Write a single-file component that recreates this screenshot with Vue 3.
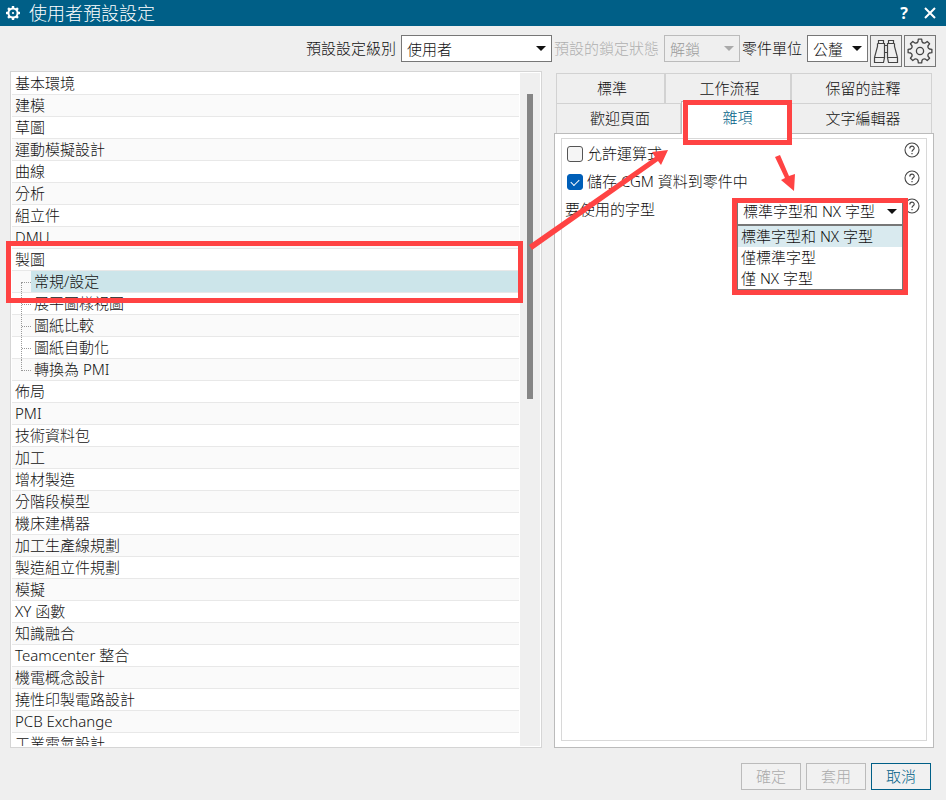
<template>
  <div class="dialog">
    <header class="titlebar">
      <svg class="titleIcon" viewBox="0 0 16 16" width="16" height="16">
        <circle cx="8" cy="8" r="4.6" fill="none" stroke="#fff" stroke-width="2" />
        <g fill="#fff">
          <rect v-for="a in 8" :key="a" x="6.8" y="1" width="2.4" height="2.6" :transform="`rotate(${a * 45} 8 8)`" />
        </g>
        <circle cx="8" cy="8" r="1.1" fill="#fff" />
      </svg>
      <h1>使用者預設設定</h1>
      <button class="titleButton help" type="button" aria-label="說明">?</button>
      <button class="titleButton" type="button" aria-label="關閉">
        <svg viewBox="0 0 12 12" width="12" height="12">
          <path d="M1 1L11 11M11 1L1 11" stroke="#fff" stroke-width="2" />
        </svg>
      </button>
    </header>

    <div class="toolbar">
      <div v-for="field in fields" :key="field.id" class="field" :class="{ disabled: field.disabled }">
        <label :for="field.id">{{ field.label }}</label>
        <div class="combo" :class="field.id">
          <select :id="field.id" :disabled="field.disabled">
            <option>{{ field.value }}</option>
          </select>
        </div>
      </div>
      <button class="iconButton" type="button" aria-label="尋找預設設定">
        <svg viewBox="0 0 30 30" width="30" height="30" fill="none" stroke="#444" stroke-width="1.2">
          <path d="M7.5 7.5V4.5H12.5V7.5M17.5 7.5V4.5H22.5V7.5" />
          <path d="M6.5 7.5H13.5V21.5M6.5 7.5V10.5L3.5 21.5V26.5H12.5L13.5 21.5H3.5M23.5 7.5H16.5V21.5M23.5 7.5V10.5L26.5 21.5V26.5H17.5L16.5 21.5H26.5" />
          <path d="M13.5 9.5H16.5M13.5 16.5H16.5" />
        </svg>
      </button>
      <button class="iconButton" type="button" aria-label="管理目前設定">
        <svg viewBox="0 0 30 30" width="30" height="30" fill="none" stroke="#444" stroke-width="1.3" stroke-linejoin="round">
          <circle cx="15" cy="15" r="3.6" />
          <path :d="gearPath" />
        </svg>
      </button>
    </div>

    <main class="content">
      <section class="treePanel">
        <ul class="tree">
          <li
            v-for="item in items"
            :key="item.name"
            :class="{ child: item.child, first: item.first, last: item.last, selected: item.name === selected }"
            @click="selected = item.name"
          >
            <span class="name">{{ item.name }}</span>
          </li>
        </ul>
        <div class="track"><div class="thumb"></div></div>
        <div class="mark treeMark"></div>
      </section>

      <section class="settings">
        <div class="tabs" role="tablist">
          <div v-for="(row, i) in tabRows" :key="i" class="tabRow" :class="'tabRow' + i">
            <button
              v-for="tab in row"
              :key="tab"
              type="button"
              role="tab"
              :aria-selected="tab === activeTab"
              :class="{ active: tab === activeTab }"
              @click="activeTab = tab"
            >
              {{ tab }}
              <span v-if="tab === '雜項'" class="mark tabMark"></span>
            </button>
          </div>
        </div>

        <div class="tabPanel" role="tabpanel">
          <div class="options">
            <div v-for="check in checks" :key="check.id" class="option">
              <input :id="check.id" v-model="check.on" type="checkbox">
              <label :for="check.id">{{ check.label }}</label>
              <button class="helpButton" type="button" aria-label="說明">
                <svg viewBox="0 0 16 16" width="16" height="16" fill="none" stroke="#444">
                  <circle cx="8" cy="8" r="7" stroke-width="1.1" />
                  <path :d="questionPath" stroke-width="1.2" />
                </svg>
              </button>
            </div>
            <div class="option">
              <label for="font">要使用的字型</label>
              <div class="fontPicker">
                <div class="combo">
                  <select id="font" v-model="font">
                    <option v-for="f in fonts" :key="f">{{ f }}</option>
                  </select>
                </div>
                <ul class="fontList" role="listbox">
                  <li
                    v-for="f in fonts"
                    :key="f"
                    role="option"
                    :aria-selected="f === font"
                    :class="{ current: f === font }"
                    @click="font = f"
                  >{{ f }}</li>
                </ul>
                <div class="mark fontMark"></div>
              </div>
              <button class="helpButton" type="button" aria-label="說明">
                <svg viewBox="0 0 16 16" width="16" height="16" fill="none" stroke="#444">
                  <circle cx="8" cy="8" r="7" stroke-width="1.1" />
                  <path :d="questionPath" stroke-width="1.2" />
                </svg>
              </button>
            </div>
          </div>
        </div>

        <svg class="arrows" viewBox="0 0 280 180" width="280" height="180">
          <g fill="#ff4343">
            <path d="M5 174L131 86L128 81L144 79L137 94L134 90L8 179Z" />
            <path d="M251 86L256 84L265 105L271 103L270 120L257 109L261 107Z" />
          </g>
        </svg>
      </section>
    </main>

    <footer class="actions">
      <button type="button" disabled>確定</button>
      <button type="button" disabled>套用</button>
      <button type="button">取消</button>
    </footer>
  </div>
</template>

<script setup>
import { ref } from "vue";

const fields = [
  { id: 'level', label: '預設設定級別', value: '使用者', disabled: false },
  { id: 'lock', label: '預設的鎖定狀態', value: '解鎖', disabled: true },
  { id: 'unit', label: '零件單位', value: '公釐', disabled: false }
]

const items = [
  { name: '基本環境' },
  { name: '建模' },
  { name: '草圖' },
  { name: '運動模擬設計' },
  { name: '曲線' },
  { name: '分析' },
  { name: '組立件' },
  { name: 'DMU' },
  { name: '製圖' },
  { name: '常規/設定', child: true, first: true },
  { name: '展平圖樣視圖', child: true },
  { name: '圖紙比較', child: true },
  { name: '圖紙自動化', child: true },
  { name: '轉換為 PMI', child: true, last: true },
  { name: '佈局' },
  { name: 'PMI' },
  { name: '技術資料包' },
  { name: '加工' },
  { name: '增材製造' },
  { name: '分階段模型' },
  { name: '機床建構器' },
  { name: '加工生產線規劃' },
  { name: '製造組立件規劃' },
  { name: '模擬' },
  { name: 'XY 函數' },
  { name: '知識融合' },
  { name: 'Teamcenter 整合' },
  { name: '機電概念設計' },
  { name: '撓性印製電路設計' },
  { name: 'PCB Exchange' },
  { name: '工業電氣設計' }
]
const selected = ref('常規/設定')

const tabRows = [
  ['標準', '工作流程', '保留的註釋'],
  ['歡迎頁面', '雜項', '文字編輯器']
]
const activeTab = ref('雜項')

const checks = ref([
  { id: 'allowExpression', label: '允許運算式', on: false },
  { id: 'saveCgm', label: '儲存 CGM 資料到零件中', on: true }
])

const fonts = ['標準字型和 NX 字型', '僅標準字型', '僅 NX 字型']
const font = ref(fonts[0])

const questionPath = 'M5.8 6.4C5.8 3.4 10.2 3.4 10.2 6.2C10.2 7.8 8 7.9 8 9.8M8 11V12.3'

function polar(r, degrees) {
  const angle = degrees * Math.PI / 180
  return (15 + r * Math.cos(angle)).toFixed(2) + ' ' + (15 + r * Math.sin(angle)).toFixed(2)
}

// outline of an eight-toothed gear around 15,15 with rounded valleys
function buildGear() {
  let d = 'M' + polar(12, -8)
  for (let a = 0; a < 360; a += 45) {
    d += 'L' + polar(12, a + 8) + 'L' + polar(9.6, a + 12)
    d += 'Q' + polar(8, a + 22.5) + ' ' + polar(9.6, a + 33) + 'L' + polar(12, a + 37)
  }
  return d + 'Z'
}
const gearPath = buildGear()
</script>

<style>
  body{
    margin: 0;
  }
</style>

<style scoped>
  *{
    box-sizing: border-box;
  }

  .dialog{
    display: flex;
    flex-direction: column;
    height: 100vh;
    background: #efefef;
    color: #111;
    font-family: "Noto Sans", "Noto Sans CJK TC", sans-serif;
    font-size: 15px;
    font-weight: 300;
  }

  button, select{
    font: inherit;
    color: inherit;
    padding: 0;
  }

  ul{
    list-style: none;
    margin: 0;
    padding: 0;
  }

  .titlebar{
    display: flex;
    align-items: center;
    height: 26px;
    padding: 0 9px 0 5px;
    background: #005f87;
    color: #fff;
  }

  .titlebar h1{
    flex: 1;
    margin: 0 0 0 8px;
    font-size: 18px;
    line-height: 24px;
    font-weight: 300;
  }

  .titleButton{
    display: flex;
    align-items: center;
    justify-content: center;
    width: 14px;
    height: 26px;
    margin-left: 12px;
    border: 0;
    background: none;
  }

  .help{
    font-size: 16px;
    font-weight: 700;
  }

  .toolbar{
    display: flex;
    justify-content: flex-end;
    gap: 2px;
    padding: 9px 10px 4px;
  }

  .field{
    display: flex;
    gap: 5px;
    line-height: 27px;
    white-space: nowrap;
  }

  .field.disabled{
    color: #b0b0b0;
  }

  .combo{
    position: relative;
  }

  .combo select{
    appearance: none;
    display: block;
    width: 100%;
    height: 27px;
    padding: 0 20px 2px 5px;
    border: 1px solid #777;
    border-radius: 0;
    background: #fff;
    opacity: 1;
  }

  .disabled .combo select{
    border-color: #bbb;
    background: #efefef;
    color: #999;
  }

  .combo::after{
    content: "";
    position: absolute;
    right: 6px;
    top: 11px;
    border: 5px solid transparent;
    border-top-color: #111;
    border-bottom: 0;
    pointer-events: none;
  }

  .disabled .combo::after{
    border-top-color: #aaa;
  }

  .level{
    width: 151px;
  }

  .lock{
    width: 76px;
  }

  .unit{
    width: 61px;
  }

  .iconButton{
    width: 32px;
    height: 32px;
    border: 1px solid #777;
    background: #efefef;
  }

  .iconButton svg{
    display: block;
  }

  .content{
    flex: 1;
    display: grid;
    grid-template-columns: 532fr 380fr;
    gap: 12px;
    min-height: 0;
    padding: 0 12px 0 10px;
  }

  .treePanel{
    position: relative;
    display: flex;
    min-height: 0;
    padding: 1px;
    border: 1px solid #d5d5d5;
    background: #fff;
  }

  .tree{
    flex: 1;
    overflow: hidden;
  }

  .tree li{
    display: flex;
    height: 22px;
    border-bottom: 1px solid #e8e8e8;
    line-height: 21px;
  }

  .tree li:nth-child(even){
    background: #fafafa;
  }

  .name{
    flex: 1;
    padding-left: 3px;
  }

  .child::before{
    content: "";
    width: 9px;
    height: 11px;
    margin-left: 9px;
    border-left: 1px dotted #999;
    border-bottom: 1px dotted #999;
  }

  .child.first::before{
    margin-top: 11px;
    border-bottom: 0;
    border-top: 1px dotted #999;
  }

  .child:not(.first):not(.last)::before{
    height: 21px;
    border-bottom: 0;
    background: repeating-linear-gradient(to right, #999 0 1px, transparent 1px 2px) 0 11px / 100% 1px no-repeat;
  }

  .selected .name{
    background: #cce5ea;
  }

  .track{
    width: 20px;
    margin-left: 1px;
    padding: 21px 7px 0;
    background: #efefef;
  }

  .thumb{
    height: 305px;
    background: #858585;
  }

  .mark{
    position: absolute;
    border: 5px solid #ff4343;
    pointer-events: none;
    z-index: 2;
  }

  .treeMark{
    top: 169px;
    left: -5px;
    right: 18px;
    height: 62px;
  }

  .settings{
    position: relative;
    display: flex;
    flex-direction: column;
    min-height: 0;
  }

  .tabs{
    padding: 2px 2px 0;
  }

  .tabRow{
    display: grid;
    height: 30px;
  }

  .tabRow0{
    grid-template-columns: 109fr 126fr 141fr;
  }

  .tabRow1{
    grid-template-columns: 125fr 110fr 141fr;
  }

  .tabRow button{
    padding: 0 0 2px 3px;
    border: 1px solid #d2d2d2;
    border-bottom: 0;
    background: #efefef;
  }

  .tabRow .active{
    position: relative;
    z-index: 1;
    margin: -2px 0 -1px;
    padding-bottom: 4px;
    border-color: #bbb;
    background: #fff;
    color: #005f87;
  }

  .tabMark{
    top: -2px;
    left: 1px;
    right: -2px;
    height: 45px;
  }

  .tabPanel{
    flex: 1;
    display: flex;
    padding: 4px 6px 6px;
    border: 1px solid #bbb;
    background: #fff;
  }

  .options{
    flex: 1;
    padding: 1px 6px 0 3px;
    border: 1px solid #d8d8d8;
  }

  .option{
    display: flex;
    align-items: flex-start;
    height: 28px;
    line-height: 26px;
  }

  .option input{
    appearance: none;
    display: grid;
    place-items: center;
    width: 16px;
    height: 16px;
    margin: 6px 4px 0 2px;
    border: 1px solid #555;
    border-radius: 3px;
    background: #f5f5f5;
  }

  .option input:checked{
    border-color: #005fb8;
    background: #005fb8;
  }

  .option input:checked::before{
    content: "";
    width: 7px;
    height: 4px;
    margin-top: -2px;
    border-left: 1px solid #fff;
    border-bottom: 1px solid #fff;
    transform: rotate(-45deg);
  }

  .option label{
    flex: 1;
  }

  .helpButton{
    width: 16px;
    height: 16px;
    margin: 2px 0 0 1px;
    border: 0;
    background: none;
  }

  .helpButton svg{
    display: block;
  }

  .fontPicker{
    position: relative;
    width: 166px;
    margin-top: 2px;
    line-height: 21px;
  }

  .fontPicker select{
    padding-bottom: 0;
  }

  .fontList{
    position: absolute;
    top: 26px;
    left: 0;
    right: 0;
    border: 1px solid #777;
    border-top-width: 2px;
    background: #fff;
  }

  .fontList li{
    padding-left: 3px;
    height: 21px;
    white-space: nowrap;
  }

  .fontList .current{
    background: #d9eaef;
  }

  .fontMark{
    inset: 0 -5px auto;
    height: 97px;
  }

  .arrows{
    position: absolute;
    top: 0;
    left: -30px;
    overflow: visible;
    pointer-events: none;
    z-index: 3;
  }

  .actions{
    display: flex;
    justify-content: flex-end;
    gap: 5px;
    padding: 15px 15px 10px;
  }

  .actions button{
    width: 60px;
    height: 27px;
    padding-bottom: 2px;
    border: 1px solid #005f87;
    background: #f1f1f1;
    color: #005f87;
  }

  .actions button:disabled{
    border-color: #bbb;
    color: #aaa;
  }
</style>
